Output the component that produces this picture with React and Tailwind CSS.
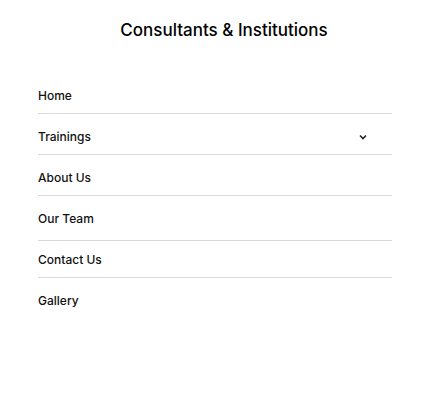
import React from 'react';

const items = [
  { label: 'Home', pad: 'pt-px pb-[7px]' },
  { label: 'Trainings', pad: 'pt-[13px] pb-[7px]', caret: true },
  { label: 'About Us', pad: 'pt-[13px] pb-[7px]' },
  { label: 'Our Team', pad: 'pt-[13px] pb-[11px]' },
  { label: 'Contact Us', pad: 'pt-[9px] pb-[7px]' },
  { label: 'Gallery', pad: 'pt-[13px]', last: true },
];

export default function App() {
  return (
    <div className="w-[430px] h-[413px] bg-white text-black font-['Inter','Noto_Sans',sans-serif]">
      <div className="pt-[18px] pl-[18px] text-center text-[17px] leading-6 font-medium">
        Consultants &amp; Institutions
      </div>

      {/* nav list */}
      <ul className="mt-[43px] ml-[38px] w-[354px]">
        {items.map(item => (
          <li
            key={item.label}
            className={`flex items-center justify-between text-[12px] leading-5 font-medium text-[#111] ${item.pad} ${
              item.last ? '' : 'border-b border-[#dadada]'
            }`}
          >
            <span>{item.label}</span>
            {item.caret && (
              <svg width="8" height="6" viewBox="0 0 8 6" className="mr-[25px]">
                <path d="M1 1.5 L4 4.5 L7 1.5" fill="none" stroke="#222" strokeWidth="1.6" />
              </svg>
            )}
          </li>
        ))}
      </ul>
    </div>
  );
}
